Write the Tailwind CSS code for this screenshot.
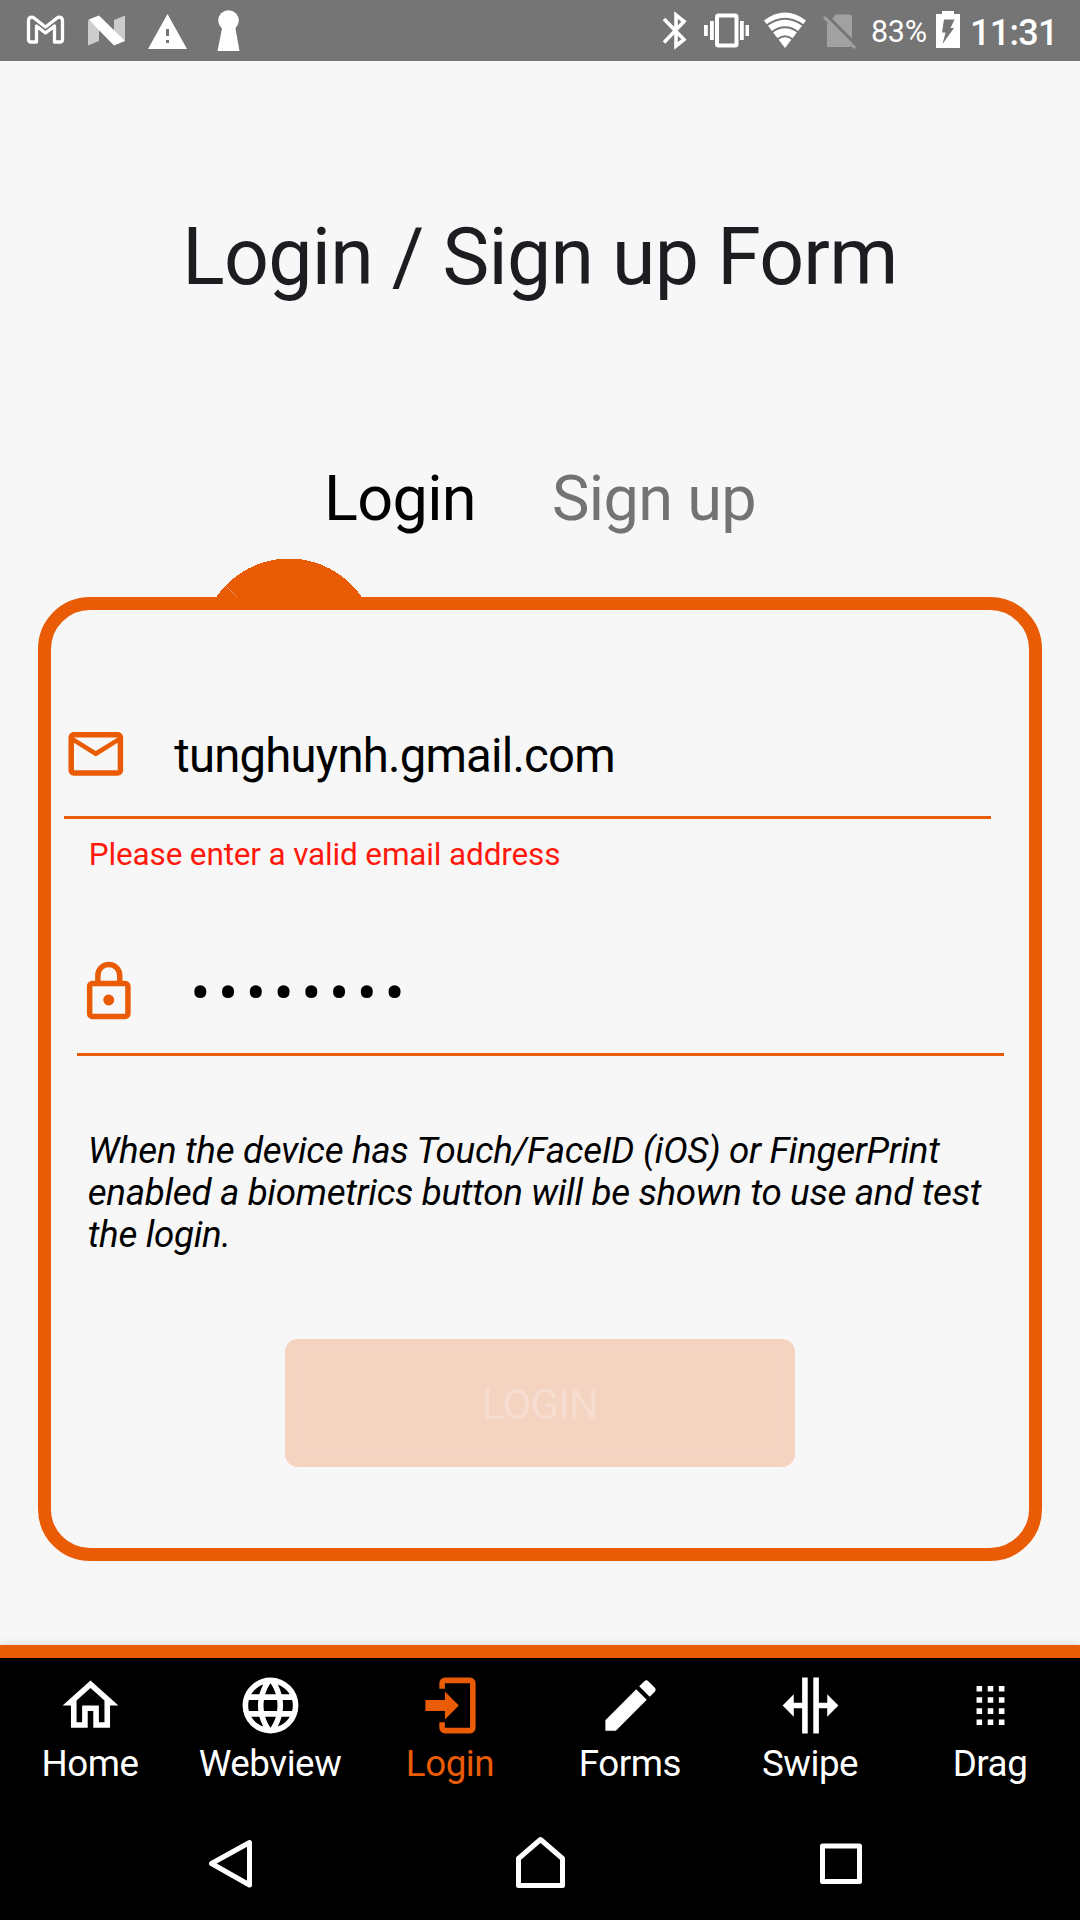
<!DOCTYPE html>
<html lang="en">
<head>
<meta charset="utf-8">
<title>Login / Sign up Form</title>
<script src="https://cdn.jsdelivr.net/npm/@tailwindcss/browser@4"></script>
</head>
<body class="w-[1080px] h-[1920px] overflow-hidden bg-[#f7f7f7] font-['Roboto',sans-serif] flex flex-col text-black">
  <!-- Status bar -->
  <header class="h-[61px] shrink-0 bg-[#757575] flex justify-between text-white">
    <svg class="w-[260px] h-[61px]" viewBox="0 0 260 61">
      <path d="M45.500 32.500L36.500 25.500V41.500H31Q28.500 41.500 28.500 39V20.500C28.500 16.500 32 15.800 34 17.500L45.500 26.500L57 17.500C59 15.800 62.500 16.500 62.500 20.500V39Q62.500 41.500 60 41.500H54.500V25.500Z" transform="translate(0 .5)" fill="none" stroke="#fff" stroke-width="3.300" stroke-linejoin="round"/>
      <path d="M88 20L99 27V41L88 45.500ZM125 15.500L114 20V33L125 41Z" fill="#ccc"/>
      <path d="M88.500 19.500L99 15.500L125 41L114 45.500Z" fill="#fff"/>
      <path d="M167.500 14L187 49H148Z" fill="#fff"/><path d="M166 29h3v7h-3zM166 40h3v3h-3z" fill="#757575"/>
      <circle cx="228.500" cy="20.500" r="10.300" fill="#fff"/><path d="M222.500 26H235L239.500 51H217.500Z" fill="#fff"/>
    </svg>
    <div class="flex items-start">
      <svg class="w-[210px] h-[61px]" viewBox="654 0 210 61">
        <path d="M664 19L684 39.500L676 46V15L684 21.500L664 42.500" fill="none" stroke="#fff" stroke-width="3.600"/>
        <rect x="717" y="15.500" width="19.500" height="30" rx="1.500" fill="none" stroke="#fff" stroke-width="4"/>
        <path d="M710 21h3.800v19H710zM704 25h3.800v11H704zM740 21h3.800v19H740zM745.500 25h3.500v11h-3.500z" fill="#fff"/>
        <path d="M764 20.500Q785 4.500 806 20.500L785 48Z" fill="#fff"/>
        <path d="M766.500 25.500Q785 12 803.500 25.500M771.500 32.500Q785 22 798.500 32.500M777 39.500Q785 33 793 39.500" fill="none" stroke="#757575" stroke-width="2"/>
        <path d="M827 47H849Q852 47 852 44V17Q852 14.500 849.500 14.500H836L827 24Z" fill="#a1a1a1"/>
        <path d="M826.500 15L856.500 45" stroke="#757575" stroke-width="3"/>
        <path d="M824 17L855 48" stroke="#a1a1a1" stroke-width="3"/>
      </svg>
      <span class="w-[64px] pl-[7px] h-[61px] pt-[14px] text-[30.500px] leading-[36px] tracking-[-0.300px]">83%</span>
      <svg class="ml-[8px] w-[24px] h-[61px]" viewBox="936 0 24 61">
        <path d="M942 11h12v3h6v34h-24V14h6z" fill="#fff"/>
        <path d="M944 19.500H954.500L950.500 28H954L942.500 44L945.500 32.500H942Z" fill="#757575"/>
      </svg>
      <span class="ml-[10px] w-[110px] pt-[11px] text-[36px] leading-[44px] font-medium tracking-[-0.700px]">11:31</span>
    </div>
  </header>

  <main class="h-[1584px] shrink-0 flex flex-col items-center">
    <h1 class="mt-[146px] text-[78.750px] leading-[100px] tracking-[-0.700px] text-[#1c1d21] whitespace-nowrap">Login / Sign up Form</h1>
    <nav class="mt-[154px] flex gap-[76px] text-[63px] leading-[76px] tracking-[-0.650px]">
      <span>Login</span>
      <span class="text-[#737373]">Sign up</span>
    </nav>

    <section class="relative mt-[60px] w-[1004.500px] h-[963.500px] border-[13px] border-[#ea5b06] rounded-[52px] flex flex-col">
      <!-- Active tab marker sits over the card's border -->
      <svg class="absolute left-[147px] top-[-52px] w-[180px] h-[52px]" viewBox="198 558 180 52">
        <path d="M209.200 609.500A88 88 0 0 1 368.800 609.500Z" fill="#ea5b06" shape-rendering="crispEdges"/>
        <path d="M226 586L237 597" stroke="#f08a50" stroke-width="1"/>
      </svg>

      <div class="mt-[82px] ml-[13px] w-[927px] h-[127px] border-b-[3px] border-[#ea5b06] flex items-center">
        <svg class="w-[65.600px] h-[65.600px] -ml-px" viewBox="0 0 24 24" fill="#ea5b06"><path d="M22 6C22 4.900 21.100 4 20 4H4C2.900 4 2 4.900 2 6V18C2 19.100 2.900 20 4 20H20C21.100 20 22 19.100 22 18V6M20 6L12 11L4 6H20M20 18H4V8L12 13L20 8V18Z"/></svg>
        <span class="ml-[46px] pt-[4px] text-[47.250px] leading-[60px] tracking-[-0.780px]">tunghuynh.gmail.com</span>
      </div>
      <p class="mt-[17px] ml-[38px] text-[31.500px] leading-[38px] tracking-[-0.150px] text-[#ff190c]">Please enter a valid email address</p>

      <div class="mt-[55px] ml-[26px] w-[927px] h-[127px] border-b-[3px] border-[#ea5b06] flex items-center">
        <svg class="w-[65.600px] h-[65.600px] -ml-[0.500px] mt-px" viewBox="0 0 24 24" fill="#ea5b06"><path d="M12,17C10.890,17 10,16.100 10,15C10,13.890 10.890,13 12,13A2,2 0 0,1 14,15A2,2 0 0,1 12,17M18,20V10H6V20H18M18,8A2,2 0 0,1 20,10V20A2,2 0 0,1 18,22H6C4.890,22 4,21.100 4,20V10C4,8.890 4.890,8 6,8H7V6A5,5 0 0,1 12,1A5,5 0 0,1 17,6V8H18M12,3A3,3 0 0,0 9,6V8H15V6A3,3 0 0,0 12,3Z"/></svg>
        <span class="ml-[48.500px] pt-[6px] text-[60px] leading-[60px] tracking-[7.500px]">••••••••</span>
      </div>

      <p class="mt-[74px] ml-[37px] text-[36.750px] leading-[42px] tracking-[-0.320px] italic whitespace-nowrap">When the device has Touch/FaceID (iOS) or FingerPrint<br>enabled a biometrics button will be shown to use and test<br>the login.</p>

      <button class="mt-[83px] self-center w-[510px] h-[128px] rounded-[13px] bg-[#f4d3c1] p-[12px]">
        <span class="flex size-full items-center justify-center border border-[#f5d6c5] text-[42px] leading-[50px] tracking-[-0.800px] text-[#f6ddcf] pt-[4px]">LOGIN</span>
      </button>
    </section>
  </main>

  <!-- App tabs -->
  <nav class="h-[155px] shrink-0 bg-black border-t-[13px] border-[#ea5b06] shadow-[0_0_8px_rgba(0,0,0,0.15)] grid grid-cols-6 text-white fill-white text-[36.750px] leading-[42px] tracking-[-0.450px] pt-[14px]">
    <div class="flex flex-col items-center gap-[4px]"><svg class="size-[67px]" viewBox="0 0 24 24"><path d="M12 5.690L17 10.190V18H15V12H9V18H7V10.190L12 5.690M12 3L2 12H5V20H11V14H13V20H19V12H22"/></svg>Home</div>
    <div class="flex flex-col items-center gap-[4px]"><svg class="size-[67px]" viewBox="0 0 24 24"><path d="M16.360,14C16.440,13.340 16.500,12.680 16.500,12C16.500,11.320 16.440,10.660 16.360,10H19.740C19.900,10.640 20,11.310 20,12C20,12.690 19.900,13.360 19.740,14M14.590,19.560C15.190,18.450 15.650,17.250 15.970,16H18.920C17.960,17.650 16.430,18.930 14.590,19.560M14.340,14H9.660C9.560,13.340 9.500,12.680 9.500,12C9.500,11.320 9.560,10.650 9.660,10H14.340C14.430,10.650 14.500,11.320 14.500,12C14.500,12.680 14.430,13.340 14.340,14M12,19.960C11.170,18.760 10.500,17.430 10.090,16H13.910C13.500,17.430 12.830,18.760 12,19.960M8,8H5.080C6.030,6.340 7.570,5.060 9.400,4.440C8.800,5.550 8.350,6.750 8,8M5.080,16H8C8.350,17.250 8.800,18.450 9.400,19.560C7.570,18.930 6.030,17.650 5.080,16M4.260,14C4.100,13.360 4,12.690 4,12C4,11.310 4.100,10.640 4.260,10H7.640C7.560,10.660 7.500,11.320 7.500,12C7.500,12.680 7.560,13.340 7.640,14M12,4.030C12.830,5.230 13.500,6.570 13.910,8H10.090C10.500,6.570 11.170,5.230 12,4.030M18.920,8H15.970C15.650,6.750 15.190,5.550 14.590,4.440C16.430,5.070 17.960,6.340 18.920,8M12,2C6.470,2 2,6.500 2,12A10,10 0 0,0 12,22A10,10 0 0,0 22,12A10,10 0 0,0 12,2Z"/></svg>Webview</div>
    <div class="flex flex-col items-center gap-[4px] text-[#ea5b06] fill-[#ea5b06]"><svg class="size-[67px]" viewBox="0 0 24 24"><path d="M10,17V14H3V10H10V7L15,12L10,17M10,2H19A2,2 0 0,1 21,4V20A2,2 0 0,1 19,22H10A2,2 0 0,1 8,20V18H10V20H19V4H10V6H8V4A2,2 0 0,1 10,2Z"/></svg>Login</div>
    <div class="flex flex-col items-center gap-[4px]"><svg class="size-[67px]" viewBox="0 0 24 24"><path d="M20.710,7.040C21.100,6.650 21.100,6 20.710,5.630L18.370,3.290C18,2.900 17.350,2.900 16.960,3.290L15.120,5.120L18.870,8.870M3,17.250V21H6.750L17.810,9.930L14.060,6.180L3,17.250Z"/></svg>Forms</div>
    <div class="flex flex-col items-center gap-[4px]"><svg class="size-[67px]" viewBox="0 0 24 24"><path d="M18,16V13H15V22H13V2H15V11H18V8L22,12L18,16M2,12L6,16V13H9V22H11V2H9V11H6V8L2,12Z"/></svg>Swipe</div>
    <div class="flex flex-col items-center gap-[4px]"><svg class="size-[67px]" viewBox="0 0 24 24"><path d="M7 5h2v2H7zM11 5h2v2h-2zM15 5h2v2h-2zM7 9h2v2H7zM11 9h2v2h-2zM15 9h2v2h-2zM7 13h2v2H7zM11 13h2v2h-2zM15 13h2v2h-2zM7 17h2v2H7zM11 17h2v2h-2zM15 17h2v2h-2z"/></svg>Drag</div>
  </nav>

  <!-- System navigation -->
  <footer class="h-[120px] shrink-0 bg-black">
    <svg class="w-[1080px] h-[120px]" viewBox="0 1800 1080 120" fill="none" stroke="#fff" stroke-width="5" stroke-linejoin="round">
      <path d="M211.500 1863.500L249.500 1842.500V1885Z"/>
      <path d="M518.500 1885.500V1858.500L540.500 1839.500L562.500 1858.500V1885.500Z"/>
      <path d="M822.500 1846H859.500V1881.500H822.500Z"/>
    </svg>
  </footer>
</body>
</html>
